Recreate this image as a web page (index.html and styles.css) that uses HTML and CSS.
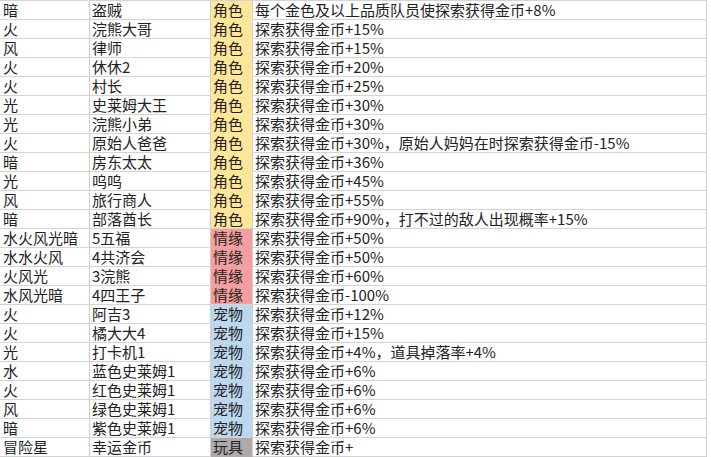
FILE: index.html
```html
<!DOCTYPE html>
<html lang="zh-CN">
<head>
<meta charset="utf-8">
<link rel="stylesheet" href="styles.css">
</head>
<body>
<div class="sheet">
  <div class="c a">暗</div><div class="c b">盗贼</div><div class="c t role">角色</div><div class="c d">每个金色及以上品质队员使探索获得金币+8%</div>
  <div class="c a">火</div><div class="c b">浣熊大哥</div><div class="c t role">角色</div><div class="c d">探索获得金币+15%</div>
  <div class="c a">风</div><div class="c b">律师</div><div class="c t role">角色</div><div class="c d">探索获得金币+15%</div>
  <div class="c a">火</div><div class="c b">休休2</div><div class="c t role">角色</div><div class="c d">探索获得金币+20%</div>
  <div class="c a">火</div><div class="c b">村长</div><div class="c t role">角色</div><div class="c d">探索获得金币+25%</div>
  <div class="c a">光</div><div class="c b">史莱姆大王</div><div class="c t role">角色</div><div class="c d">探索获得金币+30%</div>
  <div class="c a">光</div><div class="c b">浣熊小弟</div><div class="c t role">角色</div><div class="c d">探索获得金币+30%</div>
  <div class="c a">火</div><div class="c b">原始人爸爸</div><div class="c t role">角色</div><div class="c d">探索获得金币+30%，原始人妈妈在时探索获得金币-15%</div>
  <div class="c a">暗</div><div class="c b">房东太太</div><div class="c t role">角色</div><div class="c d">探索获得金币+36%</div>
  <div class="c a">光</div><div class="c b">呜呜</div><div class="c t role">角色</div><div class="c d">探索获得金币+45%</div>
  <div class="c a">风</div><div class="c b">旅行商人</div><div class="c t role">角色</div><div class="c d">探索获得金币+55%</div>
  <div class="c a">暗</div><div class="c b">部落酋长</div><div class="c t role last">角色</div><div class="c d">探索获得金币+90%，打不过的敌人出现概率+15%</div>
  <div class="c a">水火风光暗</div><div class="c b">5五福</div><div class="c t bond">情缘</div><div class="c d">探索获得金币+50%</div>
  <div class="c a">水水火风</div><div class="c b">4共济会</div><div class="c t bond">情缘</div><div class="c d">探索获得金币+50%</div>
  <div class="c a">火风光</div><div class="c b">3浣熊</div><div class="c t bond">情缘</div><div class="c d">探索获得金币+60%</div>
  <div class="c a">水风光暗</div><div class="c b">4四王子</div><div class="c t bond last">情缘</div><div class="c d">探索获得金币-100%</div>
  <div class="c a">火</div><div class="c b">阿吉3</div><div class="c t pet">宠物</div><div class="c d">探索获得金币+12%</div>
  <div class="c a">火</div><div class="c b">橘大大4</div><div class="c t pet">宠物</div><div class="c d">探索获得金币+15%</div>
  <div class="c a">光</div><div class="c b">打卡机1</div><div class="c t pet">宠物</div><div class="c d">探索获得金币+4%，道具掉落率+4%</div>
  <div class="c a">水</div><div class="c b">蓝色史莱姆1</div><div class="c t pet">宠物</div><div class="c d">探索获得金币+6%</div>
  <div class="c a">火</div><div class="c b">红色史莱姆1</div><div class="c t pet">宠物</div><div class="c d">探索获得金币+6%</div>
  <div class="c a">风</div><div class="c b">绿色史莱姆1</div><div class="c t pet">宠物</div><div class="c d">探索获得金币+6%</div>
  <div class="c a">暗</div><div class="c b">紫色史莱姆1</div><div class="c t pet last">宠物</div><div class="c d">探索获得金币+6%</div>
  <div class="c a">冒险星</div><div class="c b">幸运金币</div><div class="c t toy">玩具</div><div class="c d">探索获得金币+</div>
</div>
</body>
</html>
```

FILE: styles.css
```css
html, body {
  margin: 0;
  padding: 0;
  background: #ffffff;
}

.sheet {
  display: grid;
  grid-template-columns: 90px 121px 42px 454px;
  grid-auto-rows: 19px;
  width: 707px;
  border-top: 1px solid #d4d4d4;
  font-family: "Noto Sans CJK SC", "Noto Sans", sans-serif;
  font-size: 15px;
  color: #222222;
}

.c {
  box-sizing: border-box;
  border-right: 1px solid #cfcfcf;
  border-bottom: 1px solid #d4d4d4;
  padding-left: 2px;
  line-height: 18px;
  white-space: nowrap;
  overflow: visible;
}

.a {
  padding-left: 3px;
}

.d {
  padding-left: 2px;
}

.t {
  padding-left: 2px;
  border-bottom-color: transparent;
}

.t.last {
  border-bottom-color: #d4d4d4;
}

.role {
  background: #ffe699;
}

.bond {
  background: #f59e9e;
}

.pet {
  background: #bdd7ee;
}

.toy {
  background: #aeaaaa;
}
```
